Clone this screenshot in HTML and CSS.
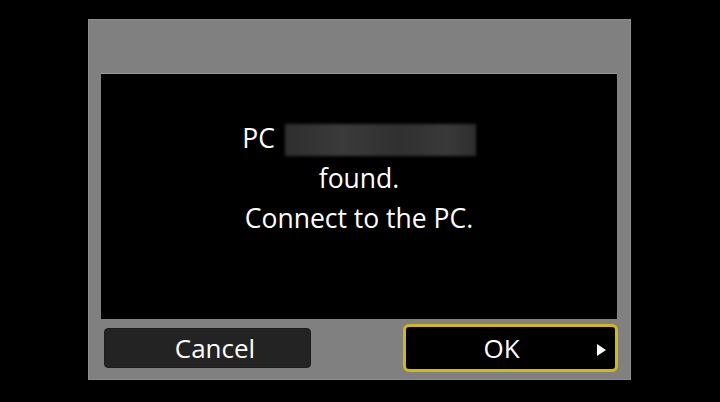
FILE: index.html
```html
<!DOCTYPE html>
<html>
<head>
<meta charset="utf-8">
<link rel="stylesheet" href="styles.css">
</head>
<body>
<div class="panel">
  <div class="message">
    <p class="line">PC <span class="blurred"></span></p>
    <p class="line">found.</p>
    <p class="line">Connect to the PC.</p>
  </div>
  <div class="buttons">
    <div class="btn cancel"><span class="label">Cancel</span></div>
    <div class="btn ok"><span class="label">OK</span><span class="arrow"></span></div>
  </div>
</div>
</body>
</html>
```
FILE: styles.css
```css
html, body {
  margin: 0;
  padding: 0;
  background: #000;
  width: 720px;
  height: 402px;
  overflow: hidden;
  font-family: "Open Sans", "Noto Sans", sans-serif;
  color: #fff;
}
.panel {
  box-sizing: border-box;
  margin: 19px 0 0 88px;
  width: 543px;
  height: 361px;
  background: #808080;
  border: 1px solid #8e8e8e;
  padding: 53px 13px 0 12px;
  display: flex;
  flex-direction: column;
}
.message {
  box-sizing: border-box;
  height: 246px;
  background: #000;
  border-top: 1px solid #9a9a9a;
  padding-top: 44px;
  text-align: center;
  font-size: 26.5px;
  line-height: 40px;
}
.line {
  margin: 0;
}
.blurred {
  display: inline-block;
  width: 191px;
  height: 32px;
  vertical-align: -8px;
  margin-left: 3px;
  background: linear-gradient(90deg, #2e2e2e, #3a3a3a 30%, #303030 60%, #393939 85%, #2e2e2e);
  filter: blur(1.5px);
}
.buttons {
  display: flex;
  justify-content: space-between;
  align-items: center;
  margin-top: 5px;
  height: 48px;
}
.btn {
  box-sizing: border-box;
  display: flex;
  align-items: center;
  justify-content: center;
  font-size: 26px;
  position: relative;
}
.cancel {
  margin-left: 3px;
  width: 207px;
  height: 40px;
  background: #232323;
  border: 1px solid #1c1c1c;
  border-radius: 4px;
  padding-left: 15px;
}
.ok {
  margin-right: -1px;
  width: 215px;
  height: 48px;
  background: #000;
  border: 3px solid #d4b90c;
  border-radius: 6px;
  padding-right: 18px;
}
.arrow {
  position: absolute;
  right: 9px;
  top: 17px;
  width: 0;
  height: 0;
  border-top: 6px solid transparent;
  border-bottom: 6px solid transparent;
  border-left: 9px solid #fff;
}
```
